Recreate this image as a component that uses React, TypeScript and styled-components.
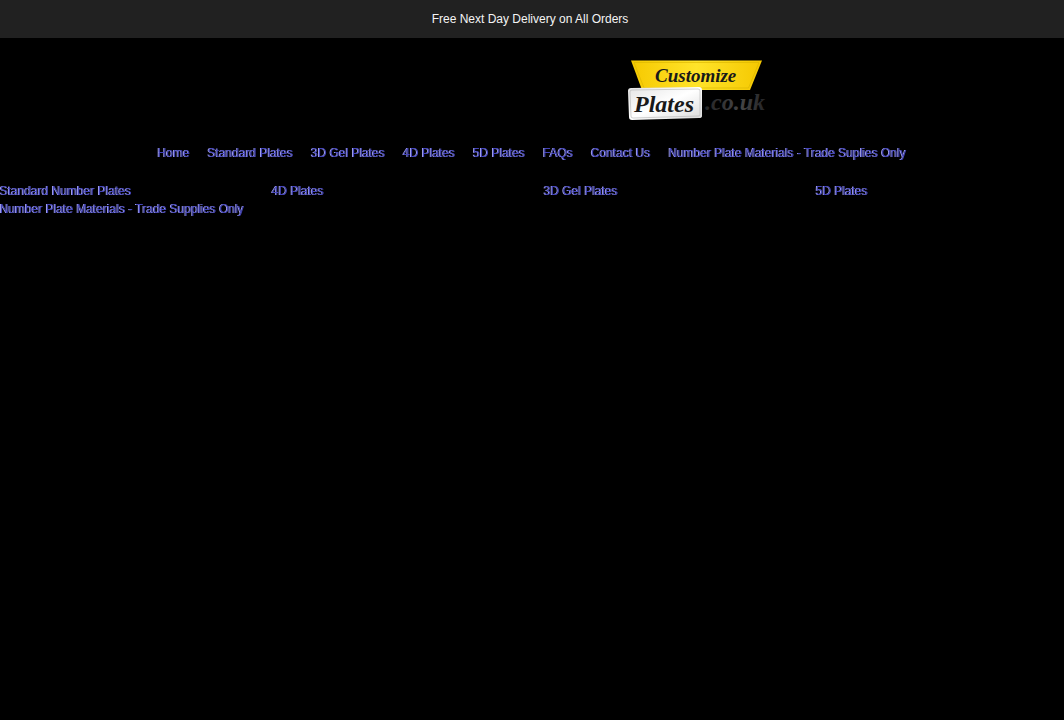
import React from "react";
import styled, { createGlobalStyle } from "styled-components";

const GlobalStyle = createGlobalStyle`
  body {
    margin: 0;
    background: #000;
    color: #fff;
    font-family: "Liberation Sans", Arial, sans-serif;
    font-size: 12px;
    line-height: 18px;
  }
`;

const Announcement = styled.p`
  margin: 0;
  padding: 10px 16px;
  padding-right: 20px;
  background: #212121;
  color: #f4f4f4;
  text-align: center;
`;

const Header = styled.header`
  display: grid;
  grid-template-columns: 1fr 1fr;
  padding: 18px 0 20px;
`;

const LogoLink = styled.a`
  grid-column: 2;
  justify-self: start;
  margin-left: 92px;
  line-height: 0;
`;

const TextLink = styled.a`
  color: #4444b8;
  text-decoration: none;
  text-shadow: -1px 0 0 #a0a0e8;
  will-change: opacity;
`;

const MainNav = styled.nav`
  display: flex;
  flex-wrap: wrap;
  justify-content: center;
  gap: 18px;
  padding-bottom: 20px;
`;

const Collections = styled.ul`
  display: grid;
  grid-template-columns: repeat(4, 1fr);
  column-gap: 24px;
  margin: 0;
  padding: 0;
  list-style: none;
  white-space: nowrap;
`;

const navItems = [
  "Home",
  "Standard Plates",
  "3D Gel Plates",
  "4D Plates",
  "5D Plates",
  "FAQs",
  "Contact Us",
  "Number Plate Materials - Trade Suplies Only",
];

const collections = [
  "Standard Number Plates",
  "4D Plates",
  "3D Gel Plates",
  "5D Plates",
  "Number Plate Materials - Trade Supplies Only",
];

function Logo() {
  return (
    <svg width="144" height="68" viewBox="0 0 144 68" role="img" aria-label="Customize Plates .co.uk">
      <defs>
        <linearGradient id="yellow" x1="0" x2="1">
          <stop offset="0" stopColor="#f6c900" />
          <stop offset="0.5" stopColor="#ffe32a" />
          <stop offset="1" stopColor="#f5c800" />
        </linearGradient>
        <linearGradient id="silver" x1="0" x2="1" y2="1">
          <stop offset="0" stopColor="#e4e4e4" />
          <stop offset="0.5" stopColor="#fff" />
          <stop offset="1" stopColor="#dadada" />
        </linearGradient>
        <linearGradient id="smoke" x1="0" x2="1">
          <stop offset="0" stopColor="#242426" />
          <stop offset="0.6" stopColor="#454546" />
          <stop offset="1" stopColor="#242426" />
        </linearGradient>
      </defs>
      <path d="M7 4.500H138L126 34H18Z" fill="url(#yellow)" />
      <path d="M10 6.500H135L124.500 32H20Z" fill="none" stroke="#d8b400" strokeWidth="0.600" />
      <path d="M7 32L75 31Q78 31 78 34V60Q78 62 75 62L8 64Q5 64 5 61L4 35Q4 32 7 32Z" fill="url(#silver)" />
      <path d="M8 34L74 33Q76 33 76 35V59Q76 60 74 60L9 62Q7 62 7 60L6 36Q6 34 8 34Z" fill="none" stroke="#b4b4b4" strokeWidth="0.600" />
      <g fontFamily="Liberation Serif, serif" fontWeight="700" fontStyle="italic">
        <text x="31" y="26" fontSize="19" fill="#191919">Customize</text>
        <text x="10" y="56" fontSize="24" fill="#191919">Plates</text>
        <text x="81" y="54" fontSize="24" fill="url(#smoke)">.co.uk</text>
      </g>
    </svg>
  );
}

export default function App() {
  return (
    <>
      <GlobalStyle />
      <Announcement>Free Next Day Delivery on All Orders</Announcement>
      <Header>
        <LogoLink href="#">
          <Logo />
        </LogoLink>
      </Header>
      <MainNav>
        {navItems.map((item) => (
          <TextLink href="#" key={item}>
            {item}
          </TextLink>
        ))}
      </MainNav>
      <Collections>
        {collections.map((item) => (
          <li key={item}>
            <TextLink href="#">{item}</TextLink>
          </li>
        ))}
      </Collections>
    </>
  );
}
